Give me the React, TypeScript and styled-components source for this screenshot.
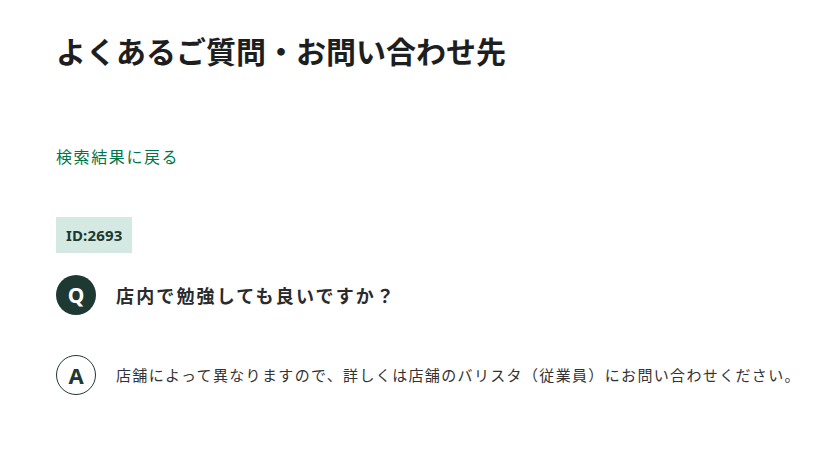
import React from "react";
import styled, { createGlobalStyle } from "styled-components";

const Global = createGlobalStyle`
  html, body {
    margin: 0;
    padding: 0;
    background: #fff;
  }
  body {
    font-family: "Noto Sans CJK JP", "Noto Sans", sans-serif;
    color: rgba(0, 0, 0, 0.87);
  }
`;

const Page = styled.main`
  padding: 28px 20px 40px 56px;
  display: flex;
  flex-direction: column;
  align-items: flex-start;
`;

const Title = styled.h1`
  margin: 0;
  font-size: 30px;
  line-height: 45px;
  font-weight: 700;
  letter-spacing: 0;
  color: #1e1e1e;
`;

const BackLink = styled.a`
  margin-top: 71px;
  font-size: 16px;
  line-height: 24px;
  letter-spacing: 1.6px;
  color: #00754a;
  text-decoration: none;
  cursor: pointer;
`;

const Badge = styled.span`
  margin-top: 49px;
  display: inline-flex;
  align-items: center;
  height: 36px;
  padding: 0 10px;
  background: #d4e9e2;
  color: #1e3932;
  font-family: "Noto Sans", "Open Sans", sans-serif;
  font-weight: 700;
  font-size: 15px;
  letter-spacing: 0.15px;
`;

const Row = styled.div<{ $gap: number }>`
  margin-top: ${(p) => p.$gap}px;
  display: flex;
  align-items: center;
  gap: 20px;
`;

const Mark = styled.span<{ $filled?: boolean }>`
  flex: none;
  width: 40px;
  height: 40px;
  border-radius: 50%;
  box-sizing: border-box;
  display: flex;
  align-items: center;
  justify-content: center;
  font-family: "Noto Sans", "Open Sans", sans-serif;
  font-weight: 700;
  font-size: ${(p) => (p.$filled ? "21px" : "22px")};
  background: ${(p) => (p.$filled ? "#1e3932" : "#fff")};
  color: ${(p) => (p.$filled ? "#fff" : "#1e3932")};
  border: ${(p) => (p.$filled ? "none" : "1.5px solid #1e3932")};
`;

const Question = styled.p`
  margin: 0;
  font-size: 18px;
  line-height: 28px;
  font-weight: 700;
  letter-spacing: 2.15px;
  color: #2b2b2b;
`;

const Answer = styled.p`
  margin: 0;
  font-size: 15px;
  line-height: 24px;
  letter-spacing: 1.35px;
  color: #333;
  white-space: nowrap;
`;

export default function App() {
  return (
    <>
      <Global />
      <Page>
        <Title>よくあるご質問・お問い合わせ先</Title>
        <BackLink>検索結果に戻る</BackLink>
        <Badge>ID:2693</Badge>
        <Row $gap={22}>
          <Mark $filled>Q</Mark>
          <Question>店内で勉強しても良いですか？</Question>
        </Row>
        <Row $gap={40}>
          <Mark>A</Mark>
          <Answer>
            店舗によって異なりますので、詳しくは店舗のバリスタ（従業員）にお問い合わせください。
          </Answer>
        </Row>
      </Page>
    </>
  );
}
